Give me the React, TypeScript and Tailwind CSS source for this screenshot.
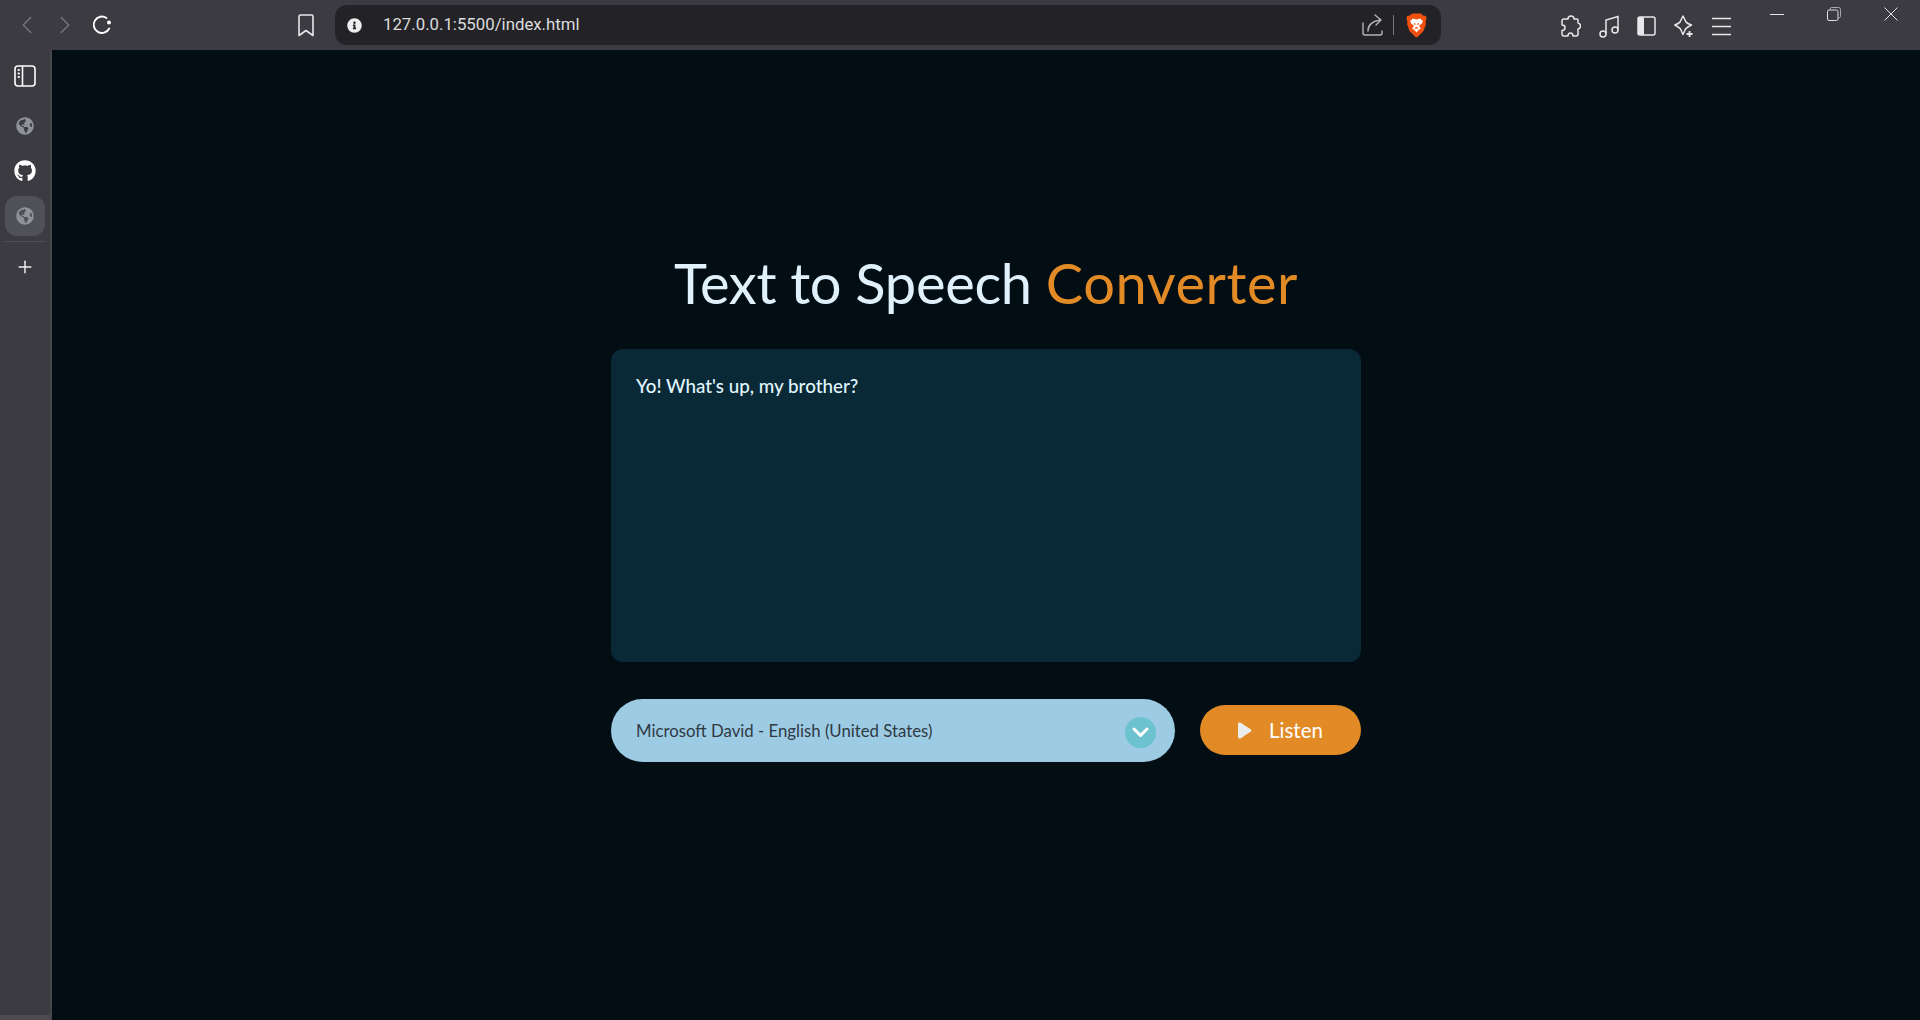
import React from 'react';
import { ChevronLeft, ChevronRight, Plus } from 'lucide-react';
import { FaGithub, FaGlobeAmericas, FaInfoCircle } from 'react-icons/fa';

function BraveLogo() {
    return (
        <svg width="21" height="25" viewBox="0 0 21 25">
            <path d="M6 0.5 L15 0.5 L17 2.5 L20 3 L20.5 6 L19.5 9 L20 11 L17.5 18 L11.5 24 L10.5 24.5 L9.5 24 L3.5 18 L1 11 L1.5 9 L0.5 6 L1 3 L4 2.5 Z" fill="#f1500f" />
            <path d="M4 8 L7 5.5 L10.5 6.5 L14 5.5 L17 8 L15.5 11 L13.5 12 L13.5 14 L15 15.5 L12.5 17 L10.5 19.5 L8.5 17 L6 15.5 L7.5 14 L7.5 12 L5.5 11 Z" fill="#fff" />
            <path d="M8 10.5 L9.5 11.5 M13 10.5 L11.5 11.5 M9 15.5 L10.5 14.5 L12 15.5" stroke="#f1500f" strokeWidth="1.2" fill="none" />
        </svg>
    );
}

function ReloadIcon() {
    return (
        <svg width="20" height="20" viewBox="0 0 20 20" fill="none">
            <path d="M17.2 13.5 A8.2 8.2 0 1 1 14.5 3" stroke="#fff" strokeWidth="1.9" strokeLinecap="round" />
            <circle cx="17" cy="7.5" r="2" fill="#fff" />
        </svg>
    );
}

function BookmarkIcon() {
    return (
        <svg width="16" height="23" viewBox="0 0 16 23" fill="none" stroke="#e8e8ea" strokeWidth="1.6" strokeLinejoin="round">
            <path d="M2.5 1 H13.5 Q15 1 15 2.5 V21.5 L8 16.5 L1 21.5 V2.5 Q1 1 2.5 1 Z" />
        </svg>
    );
}

function ShareIcon() {
    return (
        <svg width="21" height="22" viewBox="0 0 21 22" fill="none" stroke="#b4b4b8" strokeWidth="1.4" strokeLinecap="round" strokeLinejoin="round">
            <path d="M1 9 V19 Q1 21 3 21 H18 Q20 21 20 19 V17" />
            <path d="M6 17 Q6 8 18 6 M13 1 L19 6 L14 11" />
        </svg>
    );
}

function PuzzleIcon() {
    return (
        <svg width="20" height="22" viewBox="0 0 20 22" fill="none" stroke="#e8e8ea" strokeWidth="1.5" strokeLinejoin="round">
            <path d="M7 4 Q7 1 10 1 Q13 1 13 4 H16 Q17 4 17 5 V8 Q19.5 8.5 19.5 11 Q19.5 13.5 17 14 V19 Q17 21 15 21 H12 Q12 18 9.5 18 Q7 18 7 21 H3 Q1 21 1 19 V15.5 Q4 15.5 4 12.5 Q4 10 1 10 V6 Q1 4 3 4 Z" />
        </svg>
    );
}

function MusicIcon() {
    return (
        <svg width="20" height="23" viewBox="0 0 20 23" fill="none" stroke="#e8e8ea" strokeWidth="1.5">
            <circle cx="4" cy="19" r="3" />
            <circle cx="16" cy="15" r="3" />
            <path d="M7 19 V5 L19 1.5 V15" />
        </svg>
    );
}

function PanelFilledIcon() {
    return (
        <svg width="19" height="20" viewBox="0 0 19 20">
            <rect x="1" y="1" width="17" height="18" rx="2" fill="none" stroke="#e8e8ea" strokeWidth="1.5" />
            <rect x="1" y="1" width="6" height="18" rx="1.5" fill="#e8e8ea" />
        </svg>
    );
}

function StarPlusIcon() {
    return (
        <svg width="20" height="23" viewBox="0 0 20 23" fill="none" stroke="#e8e8ea" strokeWidth="1.5" strokeLinejoin="round">
            <path d="M9 1 L12 7 Q13 8.5 17.5 10 Q13 12 11.5 14 L9 19.5 L6.5 14 Q5 12 0.8 10 Q5 8.5 6 7 Z" />
            <path d="M15.5 16 V22 M12.5 19 H18.5" strokeWidth="1.8" />
        </svg>
    );
}

function MenuIcon() {
    return (
        <svg width="19" height="19" viewBox="0 0 19 19" stroke="#e8e8ea" strokeWidth="1.7">
            <path d="M0 1.5 H19 M0 9.5 H19 M0 17.5 H19" />
        </svg>
    );
}

function SidebarToggleIcon() {
    return (
        <svg width="22" height="22" viewBox="0 0 22 22" fill="none" stroke="#fff" strokeWidth="1.6">
            <rect x="1" y="1" width="20" height="20" rx="3" />
            <path d="M8.5 1 V21" />
            <path d="M4.5 5 H5 M4.5 8.5 H5 M4.5 12 H5" strokeWidth="1.8" strokeLinecap="round" />
        </svg>
    );
}

function RestoreIcon() {
    return (
        <svg width="14" height="14" viewBox="0 0 14 14" fill="none" stroke="#e0e0e2" strokeWidth="1">
            <rect x="0.5" y="3" width="10.5" height="10.5" rx="1.5" />
            <path d="M3 3 V2 Q3 0.5 4.5 0.5 H11.5 Q13.5 0.5 13.5 2.5 V9.5 Q13.5 11 11 11" stroke="#a8a8ac" />
        </svg>
    );
}

function MinimizeIcon() {
    return <div className="w-[14px] h-px bg-[#e8e8ea]" />;
}

function CloseIcon() {
    return (
        <svg width="14" height="14" viewBox="0 0 14 14" stroke="#e0e0e2" strokeWidth="1">
            <path d="M0.5 0.5 L13.5 13.5 M13.5 0.5 L0.5 13.5" />
        </svg>
    );
}

function SideIcon({ children, active, className }: { children: React.ReactNode; active?: boolean; className?: string }) {
    return (
        <div className={`w-10 h-10 flex items-center justify-center rounded-xl ${active ? 'bg-[#505156]' : ''} ${className ?? ''}`}>
            {children}
        </div>
    );
}

export default function App() {
    return (
        <div className="h-[1020px] w-[1920px] flex flex-col overflow-hidden bg-[#020d14] font-['Lato','Liberation_Sans',sans-serif]">
            {/* browser toolbar */}
            <div className="h-[50px] shrink-0 bg-[#3b3b41] flex items-start text-[#e8e8ea]">
                <div className="flex items-center w-[335px] h-[50px] pl-[12px]">
                    <ChevronLeft className="w-[30px] h-[30px] text-[#77777c]" strokeWidth={1.1} />
                    <ChevronRight className="w-[30px] h-[30px] text-[#77777c] ml-[8px]" strokeWidth={1.1} />
                    <div className="ml-[12px]">
                        <ReloadIcon />
                    </div>
                    <div className="ml-[186px]">
                        <BookmarkIcon />
                    </div>
                </div>
                <div className="mt-[5px] w-[1106px] h-[40px] rounded-xl bg-[#232327] flex items-center pl-3 pr-[14px]">
                    <FaInfoCircle className="w-[15px] h-[15px] text-[#eeeeee]" />
                    <span className="ml-[21px] text-[16.8px] font-['Roboto',sans-serif] text-[#dcdcde]">127.0.0.1:5500/index.html</span>
                    <div className="ml-auto">
                        <ShareIcon />
                    </div>
                    <div className="w-px h-5 bg-[#77777c] ml-[10px] mr-[12px]" />
                    <BraveLogo />
                </div>
                <div className="flex items-center h-[50px] pt-[2px] ml-[120px] gap-[18px]">
                    <PuzzleIcon />
                    <MusicIcon />
                    <PanelFilledIcon />
                    <StarPlusIcon />
                    <MenuIcon />
                </div>
                <div className="flex items-center ml-auto h-[14px] mt-[7px] pr-[22px] gap-[43px]">
                    <MinimizeIcon />
                    <RestoreIcon />
                    <CloseIcon />
                </div>
            </div>

            <div className="flex-1 flex min-h-0">
                {/* sidebar */}
                <div className="w-[52px] shrink-0 bg-[#3b3b41] border-r-2 border-[#46464b] flex flex-col">
                    <div className="flex-1 flex flex-col items-center pt-[6px]">
                        <SideIcon><SidebarToggleIcon /></SideIcon>
                        <SideIcon className="mt-[10px]"><FaGlobeAmericas className="w-[18px] h-[18px] text-[#8f9298]" /></SideIcon>
                        <SideIcon className="mt-[5px]"><FaGithub className="w-[22px] h-[22px] text-white" /></SideIcon>
                        <SideIcon active className="mt-[5px]"><FaGlobeAmericas className="w-[18px] h-[18px] text-[#8f9298]" /></SideIcon>
                        <div className="w-10 h-px bg-[#505156] mt-[5px]" />
                        <Plus className="w-[20px] h-[20px] mt-[15px] text-[#f0f0f2]" strokeWidth={1.75} />
                    </div>
                    <div className="h-[5px] bg-[#4b4b50]" />
                </div>

                {/* page */}
                <div className="flex-1 flex flex-col items-center pt-[199px]">
                    <h1 className="text-[56px] leading-[68px] font-normal tracking-[-0.3px] text-[#e0f1fb] text-center">
                        Text to Speech <span className="text-[#e28b26] tracking-[0.55px]">Converter</span>
                    </h1>
                    <div className="w-[750px] mt-[32px]">
                        <div className="h-[313px] rounded-xl bg-[#0a2937] px-[25px] pt-[23px] text-[18.8px] font-medium text-[#e0f6ff]">
                            Yo! What's up, my brother?
                        </div>
                        <div className="flex items-start justify-between mt-[37px]">
                            <div className="w-[564px] h-[63px] rounded-full bg-[#9dcbe3] flex items-center pl-[25px] pr-[19px] text-[16.75px] text-[#2f3a44]">
                                <span>Microsoft David - English (United States)</span>
                                <div className="ml-auto w-[31px] h-[31px] rounded-full bg-[#6cc3cf] flex items-center justify-center mt-[3px]">
                                    <svg width="17" height="11" viewBox="0 0 17 11" fill="none" stroke="#fff" strokeWidth="3" strokeLinecap="round" strokeLinejoin="round">
                                        <path d="M2 2 L8.5 8.5 L15 2" />
                                    </svg>
                                </div>
                            </div>
                            <div className="w-[161px] h-[50px] mt-[6px] rounded-full bg-[#e28b26] flex items-center justify-center gap-[17px] text-[20.5px] text-white">
                                <svg width="14" height="17" viewBox="0 0 14 17" fill="#ececec">
                                    <path d="M0 2 Q0 0 2 0.5 Q4 1 6 3 L13 7.5 Q14 8.5 13 9.5 L6 14 Q4 16 2 16.5 Q0 17 0 15 Z" />
                                </svg>
                                Listen
                            </div>
                        </div>
                    </div>
                </div>
            </div>
        </div>
    );
}
